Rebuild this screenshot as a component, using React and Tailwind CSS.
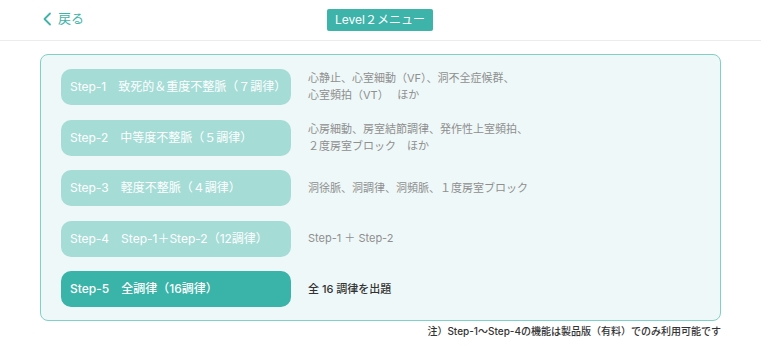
import React from "react";

const steps = [
  { label: "Step-1\u3000致死的＆重度不整脈（７調律）", desc: ["心静止、心室細動（VF）、洞不全症候群、", "心室頻拍（VT）\u3000 ほか"] },
  { label: "Step-2\u3000中等度不整脈（５調律）", desc: ["心房細動、房室結節調律、発作性上室頻拍、", "２度房室ブロック\u3000ほか"] },
  { label: "Step-3\u3000軽度不整脈（４調律）", desc: ["洞徐脈、洞調律、洞頻脈、１度房室ブロック"] },
  { label: "Step-4\u3000Step-1＋Step-2（12調律）", desc: ["Step-1 ＋ Step-2"] },
];

export default function App() {
  return (
    <div className="w-[761px] h-[352px] bg-white flex flex-col" style={{ fontFamily: 'Inter, "Noto Sans CJK JP", sans-serif' }}>
      <div className="h-[41px] border-b border-[#ececec] flex items-center relative">
        <div className="flex items-center ml-[42px] mt-[-2px] text-[#3fb3a9] text-[13px]">
          <svg width="10" height="14" viewBox="0 0 10 14" className="mr-[6px]">
            <path d="M8 1.5 L2.5 7 L8 12.5" fill="none" stroke="#3fb3a9" strokeWidth="1.8" strokeLinecap="round" strokeLinejoin="round" />
          </svg>
          <span>戻る</span>
        </div>
        <div className="absolute left-[327px] top-[9px] w-[106px] h-[22px] bg-[#3db3a9] rounded-[2px] flex items-center justify-center text-white text-[12px]">
          Level２メニュー
        </div>
      </div>
      <div className="mx-[40px] mt-[13px] h-[267px] border border-[#7fd0c6] rounded-[8px] bg-[#eef8f8] pl-[20px] pt-[14px] flex flex-col gap-[14.6px]">
        {steps.map((s, i) => (
          <div key={i} className="flex items-center h-[36px]">
            <div className="w-[230px] h-[36px] rounded-[10px] bg-[#a5dcd6] text-white text-[12px] font-normal pl-[9px] flex items-center shrink-0">
              {s.label}
            </div>
            <div className="ml-[17px] text-[11px] leading-[17px] text-[#8f8f8f]">
              {s.desc.map((d, j) => (
                <div key={j}>{d}</div>
              ))}
            </div>
          </div>
        ))}
        <div className="flex items-center h-[36px]">
          <div className="w-[230px] h-[36px] rounded-[10px] bg-[#3ab3a8] text-white text-[12px] font-medium pl-[9px] flex items-center shrink-0">
            Step-5{"\u3000"}全調律（16調律）
          </div>
          <div className="ml-[17px] text-[11px] text-[#333] font-medium">全 16 調律を出題</div>
        </div>
      </div>
      <div className="mr-[40px] mt-[3px] text-right text-[10px] text-[#333] font-medium">
        注）Step-1〜Step-4の機能は製品版（有料）でのみ利用可能です
      </div>
    </div>
  );
}
